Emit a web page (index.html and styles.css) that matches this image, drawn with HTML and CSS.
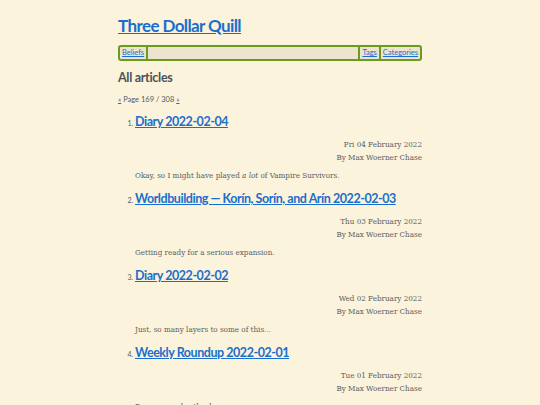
FILE: index.html
```html
<!DOCTYPE html>
<html lang="en">
<head>
<meta charset="utf-8">
<title>Three Dollar Quill</title>
<link rel="stylesheet" href="styles.css">
</head>
<body>
<div class="page">
  <header class="site-header">
    <h1 class="site-title"><a href="#">Three Dollar Quill</a></h1>
    <nav class="nav">
      <a class="nav-link" href="#">Beliefs</a>
      <span class="nav-fill"></span>
      <a class="nav-link" href="#">Tags</a>
      <a class="nav-link" href="#">Categories</a>
    </nav>
  </header>
  <main>
    <h2 class="section-title">All articles</h2>
    <p class="pager"><a href="#">«</a> Page 169 / 308 <a href="#">»</a></p>
    <ol class="articles">
      <li class="article">
        <h3 class="article-title"><a href="#">Diary 2022-02-04</a></h3>
        <div class="meta">
          <div>Fri 04 February 2022</div>
          <div>By Max Woerner Chase</div>
        </div>
        <p class="summary">Okay, so I might have played <em>a lot</em> of Vampire Survivors.</p>
      </li>
      <li class="article">
        <h3 class="article-title"><a href="#">Worldbuilding — Korín, Sorín, and Arín 2022-02-03</a></h3>
        <div class="meta">
          <div>Thu 03 February 2022</div>
          <div>By Max Woerner Chase</div>
        </div>
        <p class="summary">Getting ready for a serious expansion.</p>
      </li>
      <li class="article">
        <h3 class="article-title"><a href="#">Diary 2022-02-02</a></h3>
        <div class="meta">
          <div>Wed 02 February 2022</div>
          <div>By Max Woerner Chase</div>
        </div>
        <p class="summary">Just, so many layers to some of this...</p>
      </li>
      <li class="article">
        <h3 class="article-title"><a href="#">Weekly Roundup 2022-02-01</a></h3>
        <div class="meta">
          <div>Tue 01 February 2022</div>
          <div>By Max Woerner Chase</div>
        </div>
        <p class="summary">Progress and setbacks.</p>
      </li>
    </ol>
  </main>
</div>
</body>
</html>
```
FILE: styles.css
```css
html, body {
  margin: 0;
  padding: 0;
  background: #fbf3dc;
}
body {
  font-family: "Lato", sans-serif;
  color: #555a5e;
}
.page {
  width: 304px;
  margin: 0 auto;
  padding-top: 14px;
}
a {
  color: #1a6fcc;
}
.site-title {
  margin: 0;
  font-family: "Lato", sans-serif;
  font-size: 17px;
  font-weight: 700;
  line-height: 24px;
  letter-spacing: -0.6px;
}
.nav {
  margin-top: 7px;
  display: flex;
  align-items: stretch;
  height: 12px;
  border: 2px solid #6b9a21;
  border-radius: 3px;
  background: #ece4cf;
  font-family: "Lato", sans-serif;
  font-size: 7.5px;
  line-height: 12px;
}
.nav-link {
  padding: 0 2px;
}
.nav-fill {
  flex: 1;
  border-left: 2px solid #6b9a21;
  border-right: 2px solid #6b9a21;
}
.nav-link + .nav-link {
  border-left: 2px solid #6b9a21;
}
.section-title {
  margin: 8px 0 0;
  font-family: "Lato", sans-serif;
  font-size: 12.5px;
  font-weight: 700;
  line-height: 18px;
  letter-spacing: -0.3px;
  color: #4a5258;
}
.pager {
  margin: 7px 0 0;
  font-family: "Lato", sans-serif;
  font-size: 7.5px;
  line-height: 12px;
}
.articles {
  margin: 7px 0 0;
  padding-left: 17px;
  list-style: decimal;
}
.article {
  font-size: 7px;
}
.article::marker {
  font-family: "Lato", sans-serif;
}
.article-title {
  margin: 0;
  font-family: "Lato", sans-serif;
  font-size: 12.5px;
  font-weight: 700;
  line-height: 18px;
  letter-spacing: -0.45px;
}
.meta {
  margin-top: 8px;
  text-align: right;
  font-family: "DejaVu Serif Condensed", "DejaVu Serif", serif;
  font-stretch: condensed;
  font-size: 8px;
  line-height: 12.5px;
  color: #5a5e62;
}
.summary {
  margin: 6px 0 8px;
  font-family: "DejaVu Serif Condensed", "DejaVu Serif", serif;
  font-stretch: condensed;
  font-size: 8px;
  line-height: 12px;
  color: #5a5e62;
}
```
